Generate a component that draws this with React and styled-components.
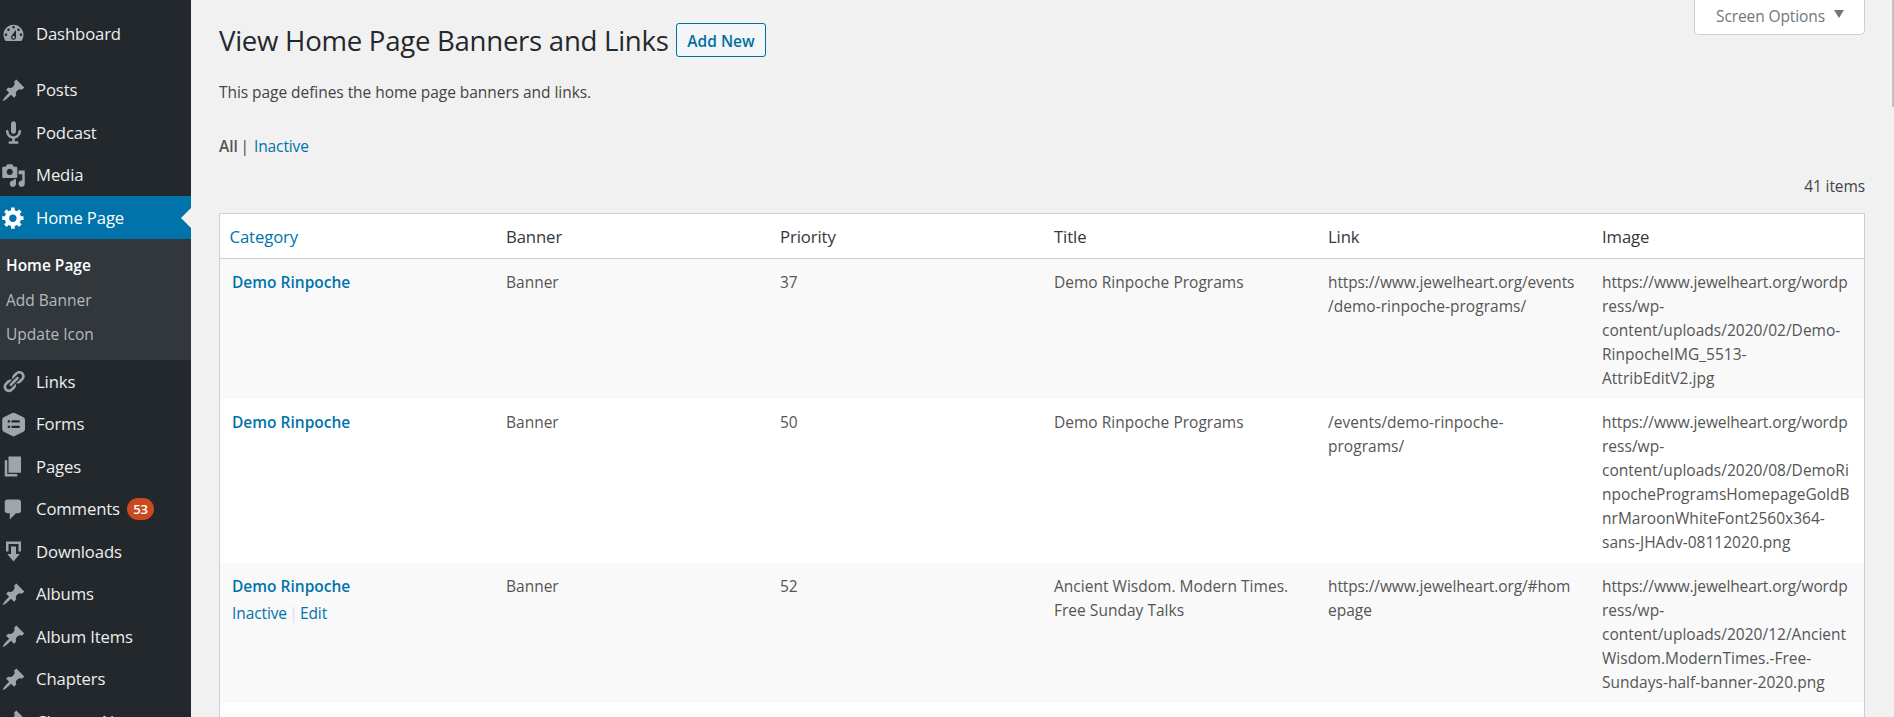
import React from "react";
import styled, { createGlobalStyle } from "styled-components";

const Global = createGlobalStyle`
  * { box-sizing: border-box; }
  html, body, #root { height: 100%; }
  body {
    margin: 0;
    overflow: hidden;
    background: #f1f1f1;
    color: #444;
    font-family: "Open Sans", "Noto Sans", sans-serif;
    font-size: 15.5px;
    line-height: 24px;
  }
  a { color: #0073aa; text-decoration: none; }
`;

const Page = styled.div`
  display: flex;
  height: 717px;
  overflow: hidden;
`;

const Sidebar = styled.nav`
  flex: none;
  width: 191px;
  padding-top: 12px;
  background: #23282d;
  overflow: hidden;
`;

const MenuItem = styled.a`
  display: flex;
  align-items: center;
  height: 42.5px;
  margin-bottom: ${(p) => (p.$gap ? "14px" : "0")};
  padding: 1px 0 0 0.5px;
  color: ${(p) => (p.$current ? "#fff" : "#eee")};
  background: ${(p) => (p.$current ? "#0073aa" : "transparent")};
  font-size: 16.7px;
  letter-spacing: -0.13px;
  white-space: nowrap;
`;

const MenuIcon = styled.svg`
  flex: none;
  width: 25px;
  height: 25px;
  margin-right: 10.5px;
  fill: ${(p) => (p.$current ? "#fff" : "#a0a5aa")};
`;

const Arrow = styled.span`
  margin-left: auto;
  border: 10px solid transparent;
  border-right-color: #f1f1f1;
  border-left-width: 0;
`;

const Count = styled.span`
  margin-left: 7px;
  min-width: 27px;
  height: 22px;
  border-radius: 11px;
  background: #ca4a1f;
  color: #fff;
  font-size: 13.2px;
  font-weight: 600;
  letter-spacing: -0.4px;
  line-height: 23px;
  text-align: center;
`;

const SubMenu = styled.div`
  height: 121.5px;
  padding: 9.5px 0 0 6px;
  background: #32373c;
`;

const SubItem = styled.a`
  display: block;
  height: 34.5px;
  line-height: 34.5px;
  color: ${(p) => (p.$current ? "#fff" : "#b4b9be")};
  font-weight: ${(p) => (p.$current ? 600 : 400)};
`;

const Content = styled.main`
  flex: 1;
  min-width: 0;
  padding: 0 27px 0 28px;
`;

const TopBar = styled.header`
  display: flex;
  justify-content: space-between;
  align-items: flex-start;
  height: 80px;
`;

const Heading = styled.div`
  display: flex;
  align-items: center;
  padding-top: 23px;
`;

const Title = styled.h1`
  margin: 0;
  width: 457px;
  color: #23282d;
  font-size: 27.6px;
  font-weight: 400;
  line-height: 34px;
  letter-spacing: -0.28px;
  white-space: nowrap;
`;

const AddNew = styled.a`
  width: 90px;
  height: 34px;
  border: 1px solid #0071a1;
  border-radius: 3px;
  background: #f3f5f6;
  color: #0071a1;
  font-weight: 600;
  line-height: 34px;
  text-align: center;
  white-space: nowrap;
`;

const ScreenOptions = styled.button`
  display: flex;
  align-items: center;
  justify-content: space-between;
  width: 171px;
  height: 35px;
  padding: 0 20px 2px 21px;
  border: 1px solid #ccd0d4;
  border-top: 0;
  border-radius: 0 0 5px 5px;
  background: #fff;
  color: #72777c;
  font: inherit;
  letter-spacing: -0.1px;
`;

const Caret = styled.span`
  margin-bottom: 4px;
  border: 5px solid transparent;
  border-top: 8px solid #72777c;
  border-bottom: 0;
`;

const Intro = styled.p`
  margin: 0;
  letter-spacing: -0.05px;
  white-space: nowrap;
`;

const Filters = styled.div`
  display: flex;
  gap: 2.5px;
  margin-top: 30px;
  color: #444;
`;

const ActiveFilter = styled.span`
  color: #555;
  font-weight: 600;
`;

const FilterLink = styled.a`
  margin-left: 2.5px;
  letter-spacing: -0.1px;
`;

const ItemCount = styled.div`
  margin-top: 16px;
  height: 39px;
  letter-spacing: -0.1px;
  text-align: right;
`;

const Table = styled.section`
  height: 600px;
  border: 1px solid #ccd0d4;
  background: #fff;
`;

const Row = styled.div`
  display: grid;
  grid-template-columns: repeat(6, 274px);
  padding: 11px 0 9px;
  background: ${(p) => (p.$shaded ? "#f9f9f9" : "#fff")};
  color: #555;
`;

const HeadRow = styled(Row)`
  height: 45px;
  border-bottom: 1px solid #ccd0d4;
  color: #32373c;
  font-size: 16.7px;
  letter-spacing: -0.1px;
`;

const Cell = styled.div`
  padding-left: ${(p) => p.$left || "12px"};
`;

const Line = styled.div`
  white-space: nowrap;
  letter-spacing: ${(p) => (p.$tight ? "-0.12px" : "0.02px")};
`;

const RowTitle = styled.a`
  display: block;
  font-weight: 600;
`;

const Actions = styled.div`
  display: flex;
  gap: 4px;
  margin-top: 3px;
  color: #ddd;
  letter-spacing: -0.1px;
`;

const Divider = styled.span`
  display: flex;
  justify-content: center;
  width: 5px;
`;

const ScrollThumb = styled.div`
  flex: none;
  width: 2px;
  height: 107px;
  background: #c1c1c1;
`;

const icons = {
  dashboard: "M3.76 16h12.48c1.1-1.37 1.76-3.11 1.76-5 0-4.42-3.58-8-8-8s-8 3.58-8 8c0 1.89.66 3.63 1.76 5zM10 4c.55 0 1 .45 1 1s-.45 1-1 1-1-.45-1-1 .45-1 1-1zM6 6c.55 0 1 .45 1 1s-.45 1-1 1-1-.45-1-1 .45-1 1-1zm8 0c.55 0 1 .45 1 1s-.45 1-1 1-1-.45-1-1 .45-1 1-1zm-5.37 5.55L12 7v6c0 1.1-.9 2-2 2s-2-.9-2-2c0-.57.24-1.08.63-1.45zM4 10c.55 0 1 .45 1 1s-.45 1-1 1-1-.45-1-1 .45-1 1-1zm12 0c.55 0 1 .45 1 1s-.45 1-1 1-1-.45-1-1 .45-1 1-1zm-5 3c0-.55-.45-1-1-1s-1 .45-1 1 .45 1 1 1 1-.45 1-1z",
  pin: "M10.44 3.02l1.82-1.82 6.36 6.35-1.83 1.82c-1.05-.68-2.48-.57-3.41.36l-.75.75c-.92.93-1.04 2.35-.35 3.41l-1.83 1.82-2.41-2.41-2.8 2.79c-.42.42-3.38 2.71-3.8 2.29s1.86-3.39 2.28-3.81l2.79-2.79L4.1 9.36l1.83-1.82c1.05.69 2.48.57 3.4-.36l.75-.75c.93-.92 1.05-2.35.36-3.41z",
  mic: "M12 9V3c0-1.1-.89-2-2-2-1.12 0-2 .94-2 2v6c0 1.1.9 2 2 2 1.13 0 2-.94 2-2zm4 0c0 2.97-2.16 5.43-5 5.91V17h2c.56 0 1 .45 1 1s-.44 1-1 1H7c-.55 0-1-.45-1-1s.45-1 1-1h2v-2.09C6.17 14.43 4 11.97 4 9c0-.55.45-1 1-1 .56 0 1 .45 1 1 0 2.21 1.8 4 4 4 2.21 0 4-1.79 4-4 0-.55.45-1 1-1 .56 0 1 .45 1 1z",
  media: "M13 11V4c0-.55-.45-1-1-1h-1.67L9 1H5L3.67 3H2c-.55 0-1 .45-1 1v7c0 .55.45 1 1 1h10c.55 0 1-.45 1-1zM7 4.5c1.38 0 2.5 1.12 2.5 2.5S8.38 9.5 7 9.5 4.5 8.38 4.5 7 5.62 4.5 7 4.5zM14 6h5v10.5c0 1.38-1.12 2.5-2.5 2.5S14 17.88 14 16.5s1.12-2.5 2.5-2.5c.17 0 .34.02.5.05V9h-3V6zm-4 8.05V13h2v3.5c0 1.38-1.12 2.5-2.5 2.5S7 17.88 7 16.5 8.12 14 9.5 14c.17 0 .34.02.5.05z",
  gear: "M18 12h-2.18c-.17.7-.44 1.35-.81 1.93l1.54 1.54-2.1 2.1-1.54-1.54c-.58.36-1.23.63-1.91.79V19H8v-2.18c-.68-.16-1.33-.43-1.91-.79l-1.54 1.54-2.12-2.12 1.54-1.54c-.36-.58-.63-1.23-.79-1.91H1V9.03h2.17c.16-.7.44-1.35.8-1.94L2.43 5.55l2.1-2.1 1.54 1.54c.58-.37 1.24-.64 1.93-.81V2h3v2.18c.68.16 1.33.43 1.91.79l1.54-1.54 2.12 2.12-1.54 1.54c.36.59.64 1.24.8 1.94H18V12zm-8.5 1.5c1.66 0 3-1.34 3-3s-1.34-3-3-3-3 1.34-3 3 1.34 3 3 3z",
  link: "M17.74 2.76c1.68 1.69 1.68 4.41 0 6.1l-1.53 1.52c-1.12 1.12-2.7 1.47-4.14 1.09l2.62-2.61.76-.77.76-.76c.84-.84.84-2.2 0-3.04-.84-.85-2.2-.85-3.04 0l-.77.76-3.38 3.38c-.37-1.44-.02-3.02 1.1-4.14l1.52-1.53c1.69-1.68 4.42-1.68 6.1 0zM8.59 13.43l5.34-5.34c.42-.42.42-1.1 0-1.52-.44-.43-1.13-.39-1.53 0l-5.33 5.34c-.42.42-.42 1.1 0 1.52.44.43 1.13.39 1.52 0zm-.76 2.29l4.14-4.15c.38 1.44.03 3.02-1.09 4.14l-1.52 1.53c-1.69 1.68-4.41 1.68-6.1 0-1.68-1.68-1.68-4.42 0-6.1l1.53-1.52c1.12-1.12 2.7-1.47 4.14-1.1l-4.14 4.15c-.85.84-.85 2.2 0 3.05.84.84 2.2.84 3.04 0z",
  forms: "M9 .8Q10 .2 11 .8L18 4.2Q19.2 4.9 19.2 6.2V13.8Q19.2 15.1 18 15.8L11 19.2Q10 19.8 9 19.2L2.2 15.8Q1 15.1 1 13.8V6.2Q1 4.9 2.2 4.2ZM5.4 6.6V8.4H7.2V6.6ZM8.4 6.6V8.4H15V6.6ZM5.4 11V12.8H7.2V11ZM8.4 11V12.8H15V11Z",
  page: "M6 15V2h10v13H6zm-1 1h8v2H3V5h2v11z",
  comment: "M5 2h9c1.1 0 2 .9 2 2v7c0 1.1-.9 2-2 2h-2l-5 5v-5H5c-1.1 0-2-.9-2-2V4c0-1.1.9-2 2-2z",
  download: "M14.01 4v6h2V2H4v8h2.01V4h8zm-2 2v6h3l-5 6-5-6h3V6h4z",
};

const menu = [
  { label: "Dashboard", icon: "dashboard", gap: true },
  { label: "Posts", icon: "pin" },
  { label: "Podcast", icon: "mic" },
  { label: "Media", icon: "media" },
  {
    label: "Home Page",
    icon: "gear",
    current: true,
    sub: [{ label: "Home Page", current: true }, { label: "Add Banner" }, { label: "Update Icon" }],
  },
  { label: "Links", icon: "link" },
  { label: "Forms", icon: "forms" },
  { label: "Pages", icon: "page" },
  { label: "Comments", icon: "comment", count: 53 },
  { label: "Downloads", icon: "download" },
  { label: "Albums", icon: "pin" },
  { label: "Album Items", icon: "pin" },
  { label: "Chapters", icon: "pin" },
  { label: "Chapter Names", icon: "pin" },
];

const rows = [
  {
    priority: 37,
    title: ["Demo Rinpoche Programs"],
    link: ["https://www.jewelheart.org/events", "/demo-rinpoche-programs/"],
    image: [
      "https://www.jewelheart.org/wordp",
      "ress/wp-",
      "content/uploads/2020/02/Demo-",
      "RinpocheIMG_5513-",
      "AttribEditV2.jpg",
    ],
  },
  {
    priority: 50,
    title: ["Demo Rinpoche Programs"],
    link: ["/events/demo-rinpoche-", "programs/"],
    image: [
      "https://www.jewelheart.org/wordp",
      "ress/wp-",
      "content/uploads/2020/08/DemoRi",
      "npocheProgramsHomepageGoldB",
      "nrMaroonWhiteFont2560x364-",
      "sans-JHAdv-08112020.png",
    ],
  },
  {
    priority: 52,
    actions: true,
    title: ["Ancient Wisdom. Modern Times.", "Free Sunday Talks"],
    link: ["https://www.jewelheart.org/#hom", "epage"],
    image: [
      "https://www.jewelheart.org/wordp",
      "ress/wp-",
      "content/uploads/2020/12/Ancient",
      "Wisdom.ModernTimes.-Free-",
      "Sundays-half-banner-2020.png",
    ],
  },
];

const Lines = ({ items }) => (
  <Cell>
    {items.map((text) => (
      <Line key={text} $tight={text.startsWith("https")}>
        {text}
      </Line>
    ))}
  </Cell>
);

export default function App() {
  return (
    <>
      <Global />
      <Page>
        <Sidebar>
          {menu.map((m) => (
            <React.Fragment key={m.label}>
              <MenuItem $current={m.current} $gap={m.gap}>
                <MenuIcon viewBox="0 0 20 20" $current={m.current}>
                  <path fillRule="evenodd" d={icons[m.icon]} />
                </MenuIcon>
                {m.label}
                {m.count && <Count>{m.count}</Count>}
                {m.current && <Arrow />}
              </MenuItem>
              {m.sub && (
                <SubMenu>
                  {m.sub.map((s) => (
                    <SubItem key={s.label} $current={s.current}>
                      {s.label}
                    </SubItem>
                  ))}
                </SubMenu>
              )}
            </React.Fragment>
          ))}
        </Sidebar>
        <Content>
          <TopBar>
            <Heading>
              <Title>View Home Page Banners and Links</Title>
              <AddNew>Add New</AddNew>
            </Heading>
            <ScreenOptions>
              Screen Options
              <Caret />
            </ScreenOptions>
          </TopBar>
          <Intro>This page defines the home page banners and links.</Intro>
          <Filters>
            <ActiveFilter>All</ActiveFilter>|<FilterLink>Inactive</FilterLink>
          </Filters>
          <ItemCount>41 items</ItemCount>
          <Table>
            <HeadRow>
              <Cell $left="9.5px">
                <a>Category</a>
              </Cell>
              <Cell>Banner</Cell>
              <Cell>Priority</Cell>
              <Cell>Title</Cell>
              <Cell>Link</Cell>
              <Cell>Image</Cell>
            </HeadRow>
            {rows.map((r, i) => (
              <Row key={r.priority} $shaded={i % 2 === 0}>
                <Cell>
                  <RowTitle>Demo Rinpoche</RowTitle>
                  {r.actions && (
                    <Actions>
                      <a>Inactive</a>
                      <Divider>|</Divider>
                      <a>Edit</a>
                    </Actions>
                  )}
                </Cell>
                <Cell>Banner</Cell>
                <Cell>{r.priority}</Cell>
                <Lines items={r.title} />
                <Lines items={r.link} />
                <Lines items={r.image} />
              </Row>
            ))}
          </Table>
        </Content>
        <ScrollThumb />
      </Page>
    </>
  );
}
